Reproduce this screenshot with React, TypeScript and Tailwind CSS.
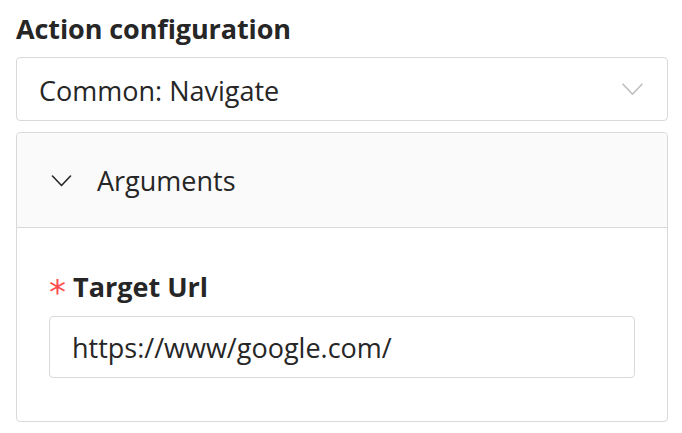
import React from 'react';

const font = { fontFamily: '"Open Sans", "Noto Sans", sans-serif' };

function Chevron({ className }: { className?: string }) {
  return (
    <svg viewBox="0 0 20 12" className={className} fill="none" stroke="currentColor" strokeWidth={1.6} strokeLinecap="round" strokeLinejoin="round">
      <path d="M1 1 L10 10.5 L19 1" />
    </svg>
  );
}

export default function App() {
  return (
    <div className="w-[682px] h-[433px] bg-white pl-[16px] pr-[14px] pt-[11px] text-[#262626]" style={font}>
      {/* title */}
      <h2 className="text-[27px] leading-[36px] font-bold tracking-[-0.1px]">Action configuration</h2>

      {/* select */}
      <div className="mt-[10px] h-[64px] border border-[#d9d9d9] rounded-[4px] flex items-center justify-between pl-[22px] pr-[24px]">
        <span className="text-[27px] leading-[36px] pt-[3px]">Common: Navigate</span>
        <Chevron className="w-[21px] h-[13px] text-[#bfbfbf]" />
      </div>

      {/* arguments panel */}
      <div className="mt-[11px] border border-[#d9d9d9] rounded-[4px] h-[290px] flex flex-col">
        <div className="h-[95px] bg-[#fafafa] border-b border-[#d9d9d9] flex items-center pl-[34px] pt-[2px] rounded-t-[4px]">
          <Chevron className="w-[21px] h-[12px] text-[#262626]" />
          <span className="ml-[25px] text-[27px] leading-[36px]">Arguments</span>
        </div>
        <div className="flex-1 pl-[32px] pr-[32px] pt-[41px]">
          <div className="flex items-center h-[36px]">
            <span className="text-[#ff4d4f] text-[34px] leading-[36px] mr-[7px] pt-[9px]" style={{ fontFamily: '"DejaVu Sans", sans-serif' }}>*</span>
            <span className="text-[27px] leading-[36px] font-bold">Target Url</span>
          </div>
          <div className="mt-[11px] h-[62px] border border-[#d9d9d9] rounded-[4px] flex items-center pl-[22px] pt-[2px]">
            <span className="text-[27px] leading-[36px]">https://www/google.com/</span>
          </div>
        </div>
      </div>
    </div>
  );
}
